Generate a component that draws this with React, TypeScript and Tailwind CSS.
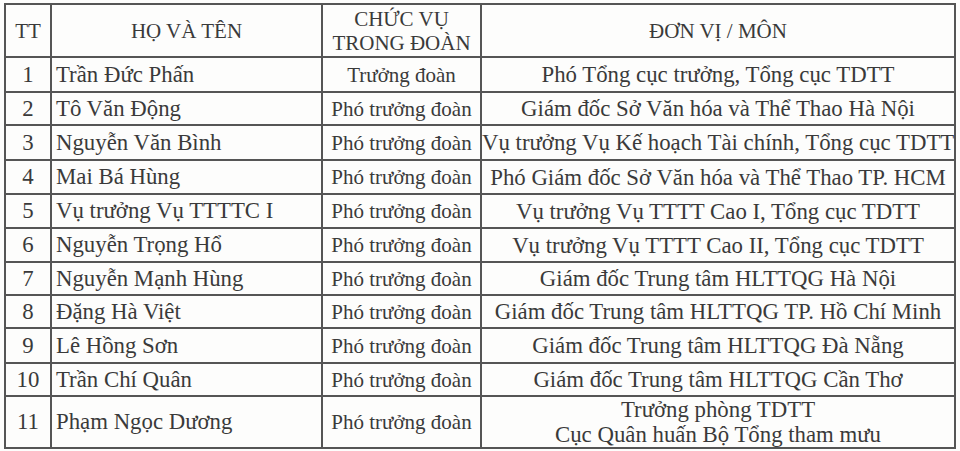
const rows = [
  { tt: '1', name: 'Trần Đức Phấn', role: 'Trưởng đoàn', unit: ['Phó Tổng cục trưởng, Tổng cục TDTT'], h: 'h-[35px]' },
  { tt: '2', name: 'Tô Văn Động', role: 'Phó trưởng đoàn', unit: ['Giám đốc Sở Văn hóa và Thể Thao Hà Nội'], h: 'h-[33px]' },
  { tt: '3', name: 'Nguyễn Văn Bình', role: 'Phó trưởng đoàn', unit: ['Vụ trưởng Vụ Kế hoạch Tài chính, Tổng cục TDTT'], h: 'h-[35px]' },
  { tt: '4', name: 'Mai Bá Hùng', role: 'Phó trưởng đoàn', unit: ['Phó Giám đốc Sở Văn hóa và Thể Thao TP. HCM'], h: 'h-[34px]' },
  { tt: '5', name: 'Vụ trưởng Vụ TTTTC I', role: 'Phó trưởng đoàn', unit: ['Vụ trưởng Vụ TTTT Cao I, Tổng cục TDTT'], h: 'h-[34px]' },
  { tt: '6', name: 'Nguyễn Trọng Hổ', role: 'Phó trưởng đoàn', unit: ['Vụ trưởng Vụ TTTT Cao II, Tổng cục TDTT'], h: 'h-[34px]' },
  { tt: '7', name: 'Nguyễn Mạnh Hùng', role: 'Phó trưởng đoàn', unit: ['Giám đốc Trung tâm HLTTQG Hà Nội'], h: 'h-[33px]' },
  { tt: '8', name: 'Đặng Hà Việt', role: 'Phó trưởng đoàn', unit: ['Giám đốc Trung tâm HLTTQG TP. Hồ Chí Minh'], h: 'h-[33px]' },
  { tt: '9', name: 'Lê Hồng Sơn', role: 'Phó trưởng đoàn', unit: ['Giám đốc Trung tâm HLTTQG Đà Nẵng'], h: 'h-[35px]' },
  { tt: '10', name: 'Trần Chí Quân', role: 'Phó trưởng đoàn', unit: ['Giám đốc Trung tâm HLTTQG Cần Thơ'], h: 'h-[33px]' },
  { tt: '11', name: 'Phạm Ngọc Dương', role: 'Phó trưởng đoàn', unit: ['Trưởng phòng TDTT', 'Cục Quân huấn Bộ Tổng tham mưu'], h: 'h-[52px]' },
]

export default function App() {
  const cell = 'border-2 border-[#555] p-0 align-middle'
  return (
    <div className="w-[960px] h-[451px] overflow-hidden bg-[#fdfdfc] pt-[3px] pl-[4px] font-['Liberation_Serif','Times_New_Roman',serif] text-[21px] leading-[26px] text-[#3a3a3a]">
      <table className="table-fixed border-collapse w-[952px]">
        <colgroup>
          <col className="w-[46px]" />
          <col className="w-[271px]" />
          <col className="w-[159px]" />
          <col />
        </colgroup>
        <thead>
          <tr className="h-[53px]">
            <th className={`${cell} font-normal text-center`}>TT</th>
            <th className={`${cell} font-normal text-center`}>HỌ VÀ TÊN</th>
            <th className={`${cell} font-normal text-center leading-[24px]`}>
              CHỨC VỤ
              <br />
              TRONG ĐOÀN
            </th>
            <th className={`${cell} font-normal text-center`}>ĐƠN VỊ / MÔN</th>
          </tr>
        </thead>
        <tbody>
          {rows.map((r) => (
            <tr key={r.tt} className={r.h}>
              <td className={`${cell} text-center text-[22.8px]`}>{r.tt}</td>
              <td className={`${cell} pl-[4px] text-left text-[22.8px]`}>{r.name}</td>
              <td className={`${cell} text-center`}>{r.role}</td>
              <td className={`${cell} text-center whitespace-nowrap text-[22.8px] leading-[25px]`}>
                {r.unit.map((u) => (
                  <div key={u}>{u}</div>
                ))}
              </td>
            </tr>
          ))}
        </tbody>
      </table>
    </div>
  )
}
